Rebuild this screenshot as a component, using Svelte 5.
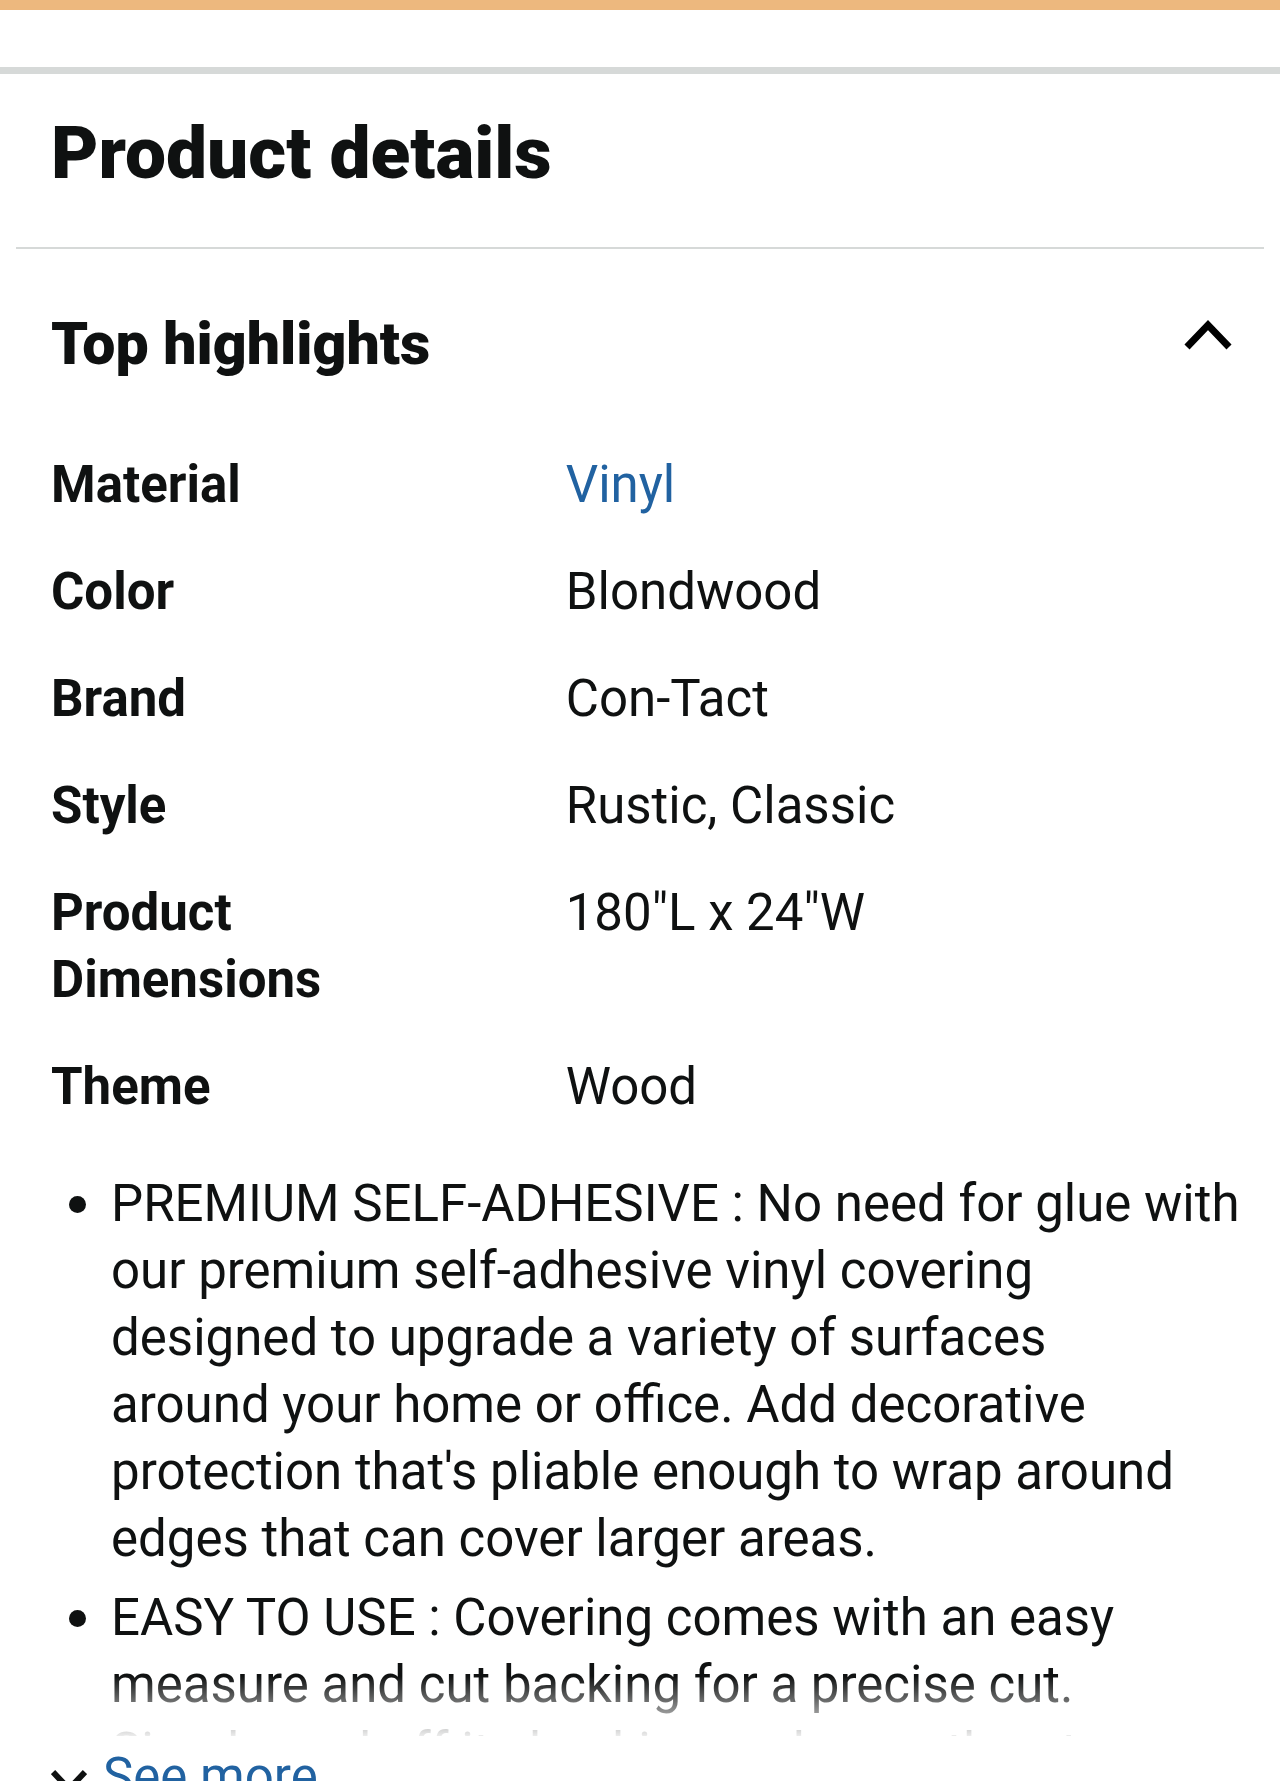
<script lang="ts">
  interface Highlight {
    label: string;
    value: string;
    href?: string;
  }

  const highlights: Highlight[] = [
    { label: "Material", value: "Vinyl", href: "#vinyl" },
    { label: "Color", value: "Blondwood" },
    { label: "Brand", value: "Con-Tact" },
    { label: "Style", value: "Rustic, Classic" },
    { label: "Product Dimensions", value: '180"L x 24"W' },
    { label: "Theme", value: "Wood" },
  ];

  const bullets = [
    `PREMIUM SELF-ADHESIVE : No need for glue with
our premium self-adhesive vinyl covering
designed to upgrade a variety of surfaces
around your home or office. Add decorative
protection that's pliable enough to wrap around
edges that can cover larger areas.`,
    `EASY TO USE : Covering comes with an easy
measure and cut backing for a precise cut.
Simply peel off its backing and smooth onto`,
  ];

  let open = $state(true);
  let expanded = $state(false);
</script>

<main class="page" class:expanded>
  <div class="swatch"></div>

  <section class="details">
    <h1>Product details</h1>

    <div class="panel">
      <h2>
        <button
          type="button"
          class="toggle"
          aria-expanded={open}
          onclick={() => (open = !open)}
        >
          <span>Top highlights</span>
          <svg class="chevron" class:closed={!open} viewBox="0 0 48 32" aria-hidden="true">
            <path d="M3 28 L24 6 L45 28" />
          </svg>
        </button>
      </h2>

      {#if open}
        <div class="content">
          <table>
            <tbody>
              {#each highlights as row}
                <tr>
                  <th scope="row">{row.label}</th>
                  <td>
                    {#if row.href}
                      <a href={row.href}>{row.value}</a>
                    {:else}
                      {row.value}
                    {/if}
                  </td>
                </tr>
              {/each}
            </tbody>
          </table>

          <ul>
            {#each bullets as bullet}
              <li>{bullet}</li>
            {/each}
          </ul>
        </div>

        <button type="button" class="more" onclick={() => (expanded = !expanded)}>
          <svg class:flipped={expanded} viewBox="0 0 36 24" aria-hidden="true">
            <path d="M2 3 L18 20 L34 3" />
          </svg>
          <span>{expanded ? "See less" : "See more"}</span>
        </button>
      {/if}
    </div>
  </section>
</main>

<style>
  :global(body) {
    margin: 0;
    background: #fff;
  }

  .page {
    height: 100vh;
    overflow: hidden;
    background: #fff;
    color: #0f1111;
    font-family: Roboto, "Liberation Sans", sans-serif;
    font-size: 51px;
    line-height: 67px;
  }

  .page.expanded {
    height: auto;
  }

  .swatch {
    height: 10px;
    background: #edb87e;
  }

  .details {
    margin-top: 57px;
    border-top: 7px solid #d6d9d8;
  }

  h1,
  h2 {
    margin: 0;
    font-weight: 900;
  }

  h1 {
    padding: 31px 51px 46px;
    font-size: 73px;
    line-height: 96px;
  }

  .panel {
    margin: 0 16px;
    padding: 55px 16px 0 35px;
    border-top: 2px solid #d6d9d8;
  }

  button {
    padding: 0;
    border: none;
    background: transparent;
    color: inherit;
    font: inherit;
    cursor: pointer;
  }

  .toggle {
    display: flex;
    justify-content: space-between;
    align-items: center;
    width: 100%;
    padding-right: 16px;
    font-size: 59px;
    line-height: 80px;
    text-align: left;
  }

  svg {
    fill: none;
    stroke: #0f1111;
    stroke-width: 6;
  }

  .chevron {
    width: 48px;
    height: 32px;
    margin-bottom: 18px;
    stroke: #000;
    stroke-width: 7;
  }

  .chevron.closed,
  .flipped {
    transform: rotate(180deg);
  }

  .content {
    position: relative;
    max-height: 1352px;
    overflow: hidden;
  }

  .expanded .content {
    max-height: none;
  }

  /* fades the cut-off text into the page */
  .content::after {
    content: "";
    position: absolute;
    right: 0;
    bottom: 0;
    left: 0;
    height: 60px;
    background: linear-gradient(to bottom, rgba(255, 255, 255, 0), rgba(255, 255, 255, 0.92));
  }

  .expanded .content::after {
    display: none;
  }

  table {
    width: 100%;
    margin-top: 67px;
    border-collapse: collapse;
    table-layout: fixed;
  }

  th,
  td {
    box-sizing: border-box;
    padding: 0 0 40px;
    text-align: left;
    vertical-align: top;
  }

  th {
    width: 43%;
    padding-right: 80px;
    font-weight: 700;
  }

  a,
  .more span {
    color: #2162a1;
    text-decoration: none;
  }

  ul {
    margin: 10px 0 0;
    padding-left: 60px;
    list-style: none;
  }

  li {
    position: relative;
    white-space: pre-line;
  }

  li::before {
    content: "";
    position: absolute;
    top: 26px;
    left: -42px;
    width: 17px;
    height: 17px;
    border-radius: 50%;
    background: #0f1111;
  }

  li + li {
    margin-top: 12px;
  }

  .more {
    display: flex;
    align-items: center;
    gap: 16px;
    margin-top: 7px;
  }

  .more svg {
    width: 36px;
    height: 24px;
    margin-top: 8px;
  }
</style>
